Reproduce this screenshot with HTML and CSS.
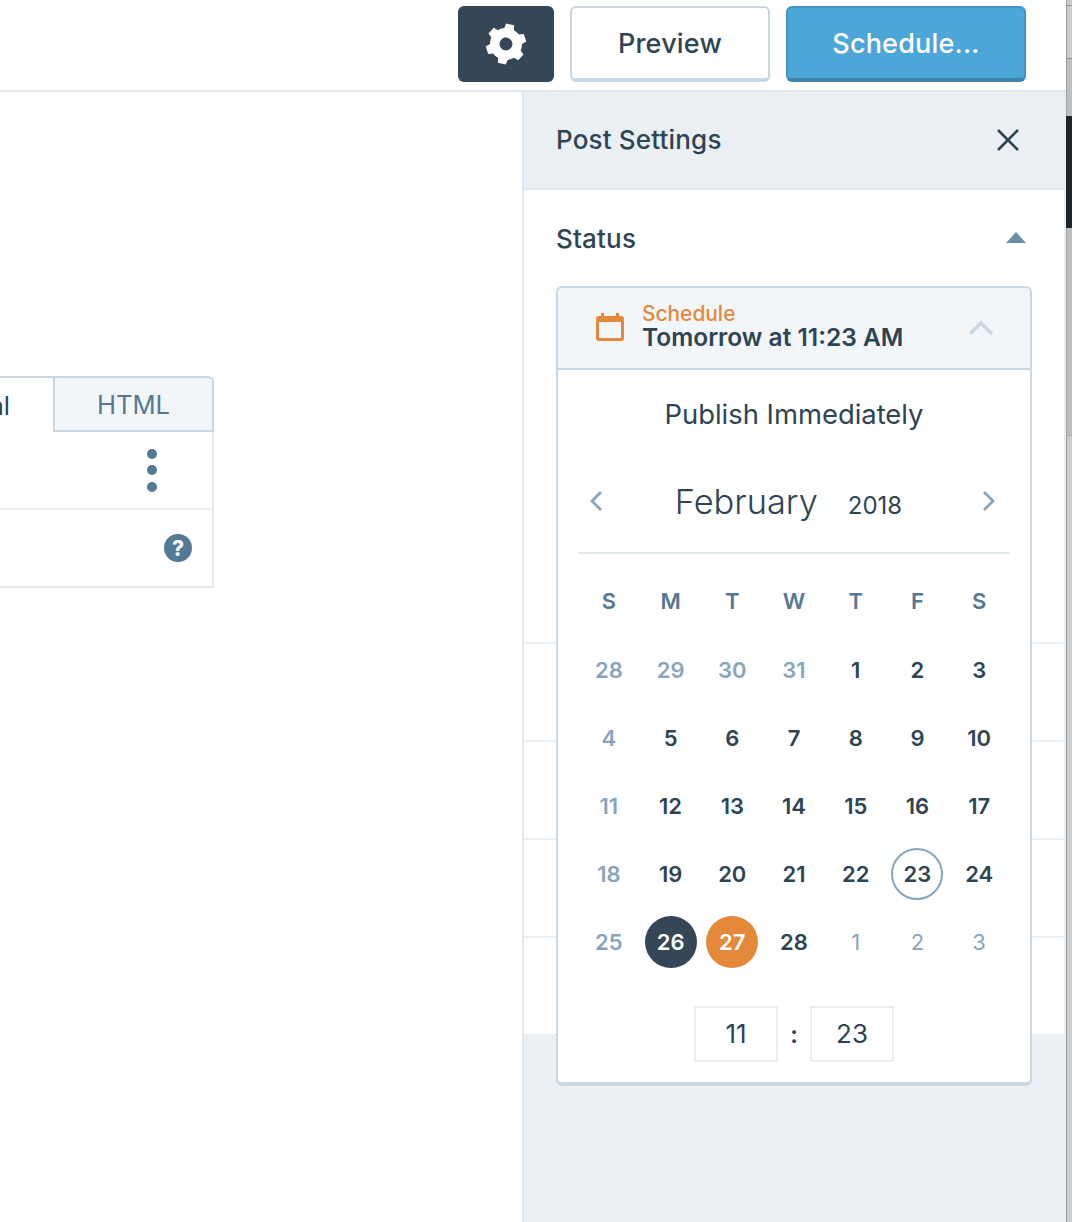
FILE: index.html
```html
<!DOCTYPE html>
<html lang="en">
<head>
  <meta charset="UTF-8">
  <meta name="viewport" content="width=device-width, initial-scale=1.0">
  <title>Post Settings</title>
  <link rel="stylesheet" href="styles.css">
</head>
<body>
  <div class="app">
    <div class="window">
      <header class="topbar">
        <button class="btn btn-gear" aria-label="Settings">
          <svg class="gear-icon" viewBox="0 0 24 24"><path fill-rule="evenodd" d="M20 12c0-.568-.06-1.122-.174-1.656l1.834-1.612-2-3.464-2.322.786c-.82-.736-1.787-1.308-2.86-1.657L14 2h-4l-.48 2.396c-1.07.35-2.04.92-2.858 1.657L4.34 5.268l-2 3.464 1.834 1.612C4.06 10.878 4 11.432 4 12s.06 1.122.174 1.656L2.34 15.268l2 3.464 2.322-.786c.82.736 1.787 1.308 2.86 1.657L10 22h4l.48-2.396c1.07-.35 2.038-.92 2.858-1.657l2.322.786 2-3.464-1.834-1.612C19.94 13.122 20 12.568 20 12zm-8 3.2c-1.77 0-3.2-1.43-3.2-3.2s1.43-3.2 3.2-3.2 3.2 1.43 3.2 3.2-1.43 3.2-3.2 3.2z"/></svg>
        </button>
        <button class="btn btn-preview">Preview</button>
        <button class="btn btn-schedule">Schedule...</button>
      </header>

      <div class="workspace">
        <main class="editor">
          <div class="editor-block">
            <div class="tabs">
              <div class="tab tab-active">Visual</div>
              <div class="tab">HTML</div>
            </div>
            <div class="block-row block-toolbar">
              <span class="dots"><i></i><i></i><i></i></span>
            </div>
            <div class="block-row block-footer">
              <span class="help">?</span>
            </div>
          </div>
        </main>

        <aside class="sidebar">
          <div class="sidebar-head">
            <h2>Post Settings</h2>
            <svg class="close-icon" viewBox="0 0 24 24"><path d="M2 2l20 20M22 2L2 22"/></svg>
          </div>
          <div class="panels">
            <section class="panel panel-status">
              <div class="panel-title">
                <h3>Status</h3>
                <span class="caret-up"></span>
              </div>
            </section>
            <section class="panel"></section>
            <section class="panel"></section>
            <section class="panel"></section>
            <section class="panel panel-last"></section>

            <div class="popover">
              <div class="pop-head">
                <svg class="cal-icon" viewBox="0 0 28 28"><path d="M5 0h3v3h12V0h3v3h2a3 3 0 0 1 3 3v19a3 3 0 0 1-3 3H3a3 3 0 0 1-3-3V6a3 3 0 0 1 3-3h2zM3 9v16h22V9z" fill-rule="evenodd"/></svg>
                <div class="pop-label">
                  <div class="pop-kicker">Schedule</div>
                  <div class="pop-when">Tomorrow at 11:23 AM</div>
                </div>
                <svg class="chev-up" viewBox="0 0 26 16"><path d="M2 14L13 3l11 11"/></svg>
              </div>
              <div class="pop-body">
                <div class="publish-now">Publish Immediately</div>
                <div class="month-nav">
                  <svg class="chev-side" viewBox="0 0 14 22"><path d="M12 2L3 11l9 9"/></svg>
                  <div class="month-label"><span class="month">February</span><span class="year">2018</span></div>
                  <svg class="chev-side" viewBox="0 0 14 22"><path d="M2 2l9 9-9 9"/></svg>
                </div>
                <div class="cal-grid">
                  <div class="dow">S</div><div class="dow">M</div><div class="dow">T</div><div class="dow">W</div><div class="dow">T</div><div class="dow">F</div><div class="dow">S</div>
                  <div class="day out">28</div><div class="day out">29</div><div class="day out">30</div><div class="day out">31</div><div class="day">1</div><div class="day">2</div><div class="day">3</div>
                  <div class="day out">4</div><div class="day">5</div><div class="day">6</div><div class="day">7</div><div class="day">8</div><div class="day">9</div><div class="day">10</div>
                  <div class="day out">11</div><div class="day">12</div><div class="day">13</div><div class="day">14</div><div class="day">15</div><div class="day">16</div><div class="day">17</div>
                  <div class="day out">18</div><div class="day">19</div><div class="day">20</div><div class="day">21</div><div class="day">22</div><div class="day"><span class="today">23</span></div><div class="day">24</div>
                  <div class="day out">25</div><div class="day"><span class="mark-dark">26</span></div><div class="day"><span class="mark-orange">27</span></div><div class="day">28</div><div class="day next">1</div><div class="day next">2</div><div class="day next">3</div>
                </div>
                <div class="time-row">
                  <input class="time-field" type="text" value="11">
                  <span class="time-sep">:</span>
                  <input class="time-field" type="text" value="23">
                </div>
              </div>
            </div>
          </div>
        </aside>
      </div>
    </div>

    <div class="scroll-strip">
      <div class="strip-seg strip-a"></div>
      <div class="strip-seg strip-b"></div>
      <div class="strip-seg strip-c"></div>
      <div class="strip-thumb"></div>
      <div class="strip-seg strip-d"></div>
      <div class="strip-seg strip-e"></div>
    </div>
  </div>
</body>
</html>
```

FILE: styles.css
```css
* { box-sizing: border-box; }
html, body { margin: 0; padding: 0; height: 100%; overflow: hidden; }
body { font-family: Inter, "Noto Sans", sans-serif; color: #2e4453; background: #fff; }

.app { display: flex; height: 1222px; }
.window { width: 1066px; display: flex; flex-direction: column; }

.scroll-strip { width: 6px; display: flex; flex-direction: column; background: #bdbfc0; border-left: 1px solid #9b9d9e; }
.strip-seg { border-top: 1px solid #8f9192; }
.strip-a { height: 5px; border-top: 0; background: #c9cbcc; }
.strip-b { height: 53px; background: #c9cbcc; }
.strip-c { height: 58px; }
.strip-d { height: 207px; border-top: 0; }
.strip-e { flex: 1; border-top-color: #a5a7a8; background: #c9cbcc; }
.strip-thumb { height: 112px; margin-left: -1px; background: #1f2426; }

/* top bar */
.topbar { height: 92px; flex: none; display: flex; justify-content: flex-end; gap: 16px; padding: 6px 40px 0 0; border-bottom: 2px solid #e0e8ee; }
.btn { height: 76px; border-radius: 6px; border: 0; font-family: inherit; font-size: 27px; font-weight: 500; letter-spacing: .2px; cursor: pointer; padding: 0; }
.btn-gear { width: 96px; background: #354656; display: flex; align-items: center; justify-content: center; }
.gear-icon { width: 48px; height: 48px; fill: #fff; transform: rotate(12deg); }
.btn-preview { width: 200px; background: #fff; color: #2e4453; border: 2px solid #c8d7e1; border-bottom-width: 4px; }
.btn-schedule { width: 240px; background: #4ca6d8; color: #fff; border: 2px solid #4494c4; border-bottom: 4px solid #3d85ad; }

.workspace { flex: 1; display: flex; min-height: 0; }

/* editor area */
.editor { width: 522px; flex: none; padding-top: 284px; overflow: hidden; }
.editor-block { width: 214px; height: 212px; border: 2px solid #e0e8ee; border-left: 0; border-top: 0; border-radius: 0 6px 0 0; }
.tabs { display: flex; height: 56px; margin-left: -106px; margin-right: -2px; }
.tab { width: 159px; flex: none; display: flex; align-items: center; justify-content: center; font-size: 25.6px; color: #537994; background: #f3f6f8; border: 2px solid #c8d7e1; }
.tab:last-child { width: 161px; border-radius: 0 6px 0 0; }
.tab-active { background: #fff; color: #2e4453; border-bottom: 0; border-left: 0; border-right: 0; border-top: 2px solid #c8d7e1; }
.block-row { display: flex; align-items: center; justify-content: flex-end; }
.block-toolbar { height: 78px; padding-right: 55px; border-bottom: 2px solid #e9eff3; }
.block-footer { height: 76px; padding-right: 20px; }
.dots { display: flex; flex-direction: column; gap: 6.5px; }
.dots i { display: block; width: 10px; height: 10px; border-radius: 50%; background: #537994; }
.help { width: 28px; height: 28px; border-radius: 50%; background: #537994; color: #fff; font-size: 21px; font-weight: 800; display: flex; align-items: center; justify-content: center; }

/* sidebar */
.sidebar { flex: 1; display: flex; flex-direction: column; background: #e9eff3; border-left: 2px solid #e0e8ee; }
.sidebar-head { height: 98px; flex: none; display: flex; align-items: center; justify-content: space-between; padding: 0 46px 0 32px; border-bottom: 2px solid #e0e8ee; }
.sidebar-head h2 { margin: -2px 0 0; font-size: 26px; font-weight: 500; letter-spacing: .17px; }
.close-icon { width: 24px; height: 24px; fill: none; stroke: #2e4453; stroke-width: 2.6; }

.panels { position: relative; }
.panel { height: 98px; background: #fff; border-bottom: 2px solid #e9eff3; border-right: 2px solid #e9eff3; }
.panel-status { height: 454px; }
.panel-last { height: 96px; border-bottom: 0; }
.panel-title { height: 98px; display: flex; align-items: center; justify-content: space-between; padding: 0 38px 0 32px; }
.panel-title h3 { margin: -2px 0 0; font-size: 26px; font-weight: 500; letter-spacing: .17px; }
.caret-up { width: 0; height: 0; border-left: 10px solid transparent; border-right: 10px solid transparent; border-bottom: 11px solid #668eaa; margin-top: -4px; }

/* schedule popover */
.popover { position: absolute; top: 96px; left: 32px; width: 476px; height: 800px; background: #fff; border: 2px solid #c8d7e1; border-bottom-width: 4px; border-radius: 6px; }
.pop-head { height: 82px; display: flex; align-items: center; background: #f3f6f8; border-bottom: 2px solid #c8d7e1; border-radius: 4px 4px 0 0; padding: 0 36px 0 38px; }
.cal-icon { width: 28px; height: 28px; fill: #e4883a; flex: none; margin-top: -2px; }
.pop-label { flex: 1; margin-left: 18px; margin-top: -4px; }
.pop-kicker { font-size: 20.9px; line-height: 22px; font-weight: 500; color: #e4883a; }
.pop-when { font-size: 24.5px; line-height: 24px; font-weight: 600; }
.chev-up { width: 26px; height: 16px; fill: none; stroke: #c8d7e1; stroke-width: 3.4; }

.pop-body { padding: 0 20px; }
.publish-now { height: 88px; display: flex; align-items: center; justify-content: center; font-size: 27.4px; }
.month-nav { height: 96px; display: flex; align-items: center; justify-content: space-between; padding: 0 14px 8px 11px; border-bottom: 2px solid #e0e8ee; }
.chev-side { width: 14px; height: 22px; fill: none; stroke: #87a6bc; stroke-width: 2.8; }
.month-label { display: flex; align-items: baseline; gap: 30px; margin-right: 8px; }
.month { font-size: 34.4px; font-weight: 300; }
.year { font-size: 24px; }

.cal-grid { display: grid; grid-template-columns: repeat(7, 1fr); grid-auto-rows: 68px; margin-top: 14px; }
.dow, .day { display: flex; align-items: center; justify-content: center; font-size: 22px; font-weight: 600; }
.dow { color: #537994; padding-bottom: 2px; }
.day.out { color: #87a6bc; }
.day.next { color: #87a6bc; font-weight: 400; }
.today, .mark-dark, .mark-orange { width: 52px; height: 52px; border-radius: 50%; display: flex; align-items: center; justify-content: center; }
.today { border: 2px solid #87a6bc; }
.mark-dark { background: #354656; color: #fff; }
.mark-orange { background: #e4883a; color: #fff; }

.time-row { display: flex; justify-content: center; align-items: center; margin-top: 30px; }
.time-field { width: 84px; height: 56px; border: 2px solid #e9eff3; background: #fff; font-family: inherit; font-size: 26px; color: #2e4453; text-align: center; padding: 0 0 2px; }
.time-sep { width: 32px; text-align: center; font-size: 24px; font-weight: 600; }
```
